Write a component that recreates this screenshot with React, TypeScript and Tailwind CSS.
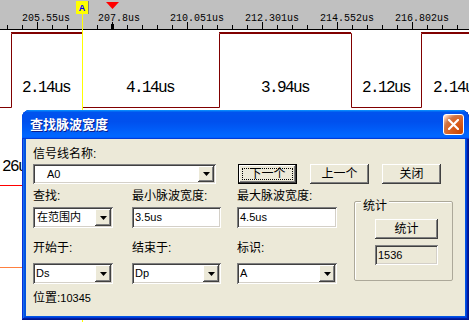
import React from 'react';

const ticks = Array.from({ length: 31 }, (_, i) => 7 + i * 15);

const rulerLabels = [
  { x: 22, text: '205.55us' },
  { x: 98, text: '207.8us' },
  { x: 170, text: '210.051us' },
  { x: 245, text: '212.301us' },
  { x: 320, text: '214.552us' },
  { x: 395, text: '216.802us' },
];

const pulseLabels = [
  { x: 46, text: '2.14us' },
  { x: 150, text: '4.14us' },
  { x: 285, text: '3.94us' },
  { x: 386, text: '2.12us' },
  { x: 457, text: '2.14us' },
];

const cjk = "font-['Liberation_Sans','Noto_Sans_CJK_SC',sans-serif]";

const sunken =
  'bg-white shadow-[inset_1px_1px_#808080,inset_-1px_-1px_#ffffff,inset_2px_2px_#404040,inset_-2px_-2px_#d4d0c8]';
const raised =
  'bg-[#ece9d8] shadow-[inset_-1px_-1px_#404040,inset_1px_1px_#ffffff,inset_-2px_-2px_#808080,inset_2px_2px_#ece9d8]';

function Waveform() {
  return (
    <svg width={469} height={322} className="block">
      {/* ruler */}
      <rect x={0} y={0} width={469} height={29} fill="#c0c0c0" />
      <line x1={0} y1={29.5} x2={469} y2={29.5} stroke="#000" />
      {ticks.map((x) => {
        const tall = (x - 37) % 75 === 0;
        return (
          <line key={x} x1={x + 0.5} y1={tall ? 22 : 25} x2={x + 0.5} y2={29} stroke="#000" />
        );
      })}
      <rect x={111} y={24} width={3} height={5} fill="#000" />
      {rulerLabels.map((l) => (
        <text
          key={l.text}
          x={l.x}
          y={21}
          fontFamily="Liberation Mono, monospace"
          fontSize={10}
          fill="#000"
        >
          {l.text}
        </text>
      ))}
      {/* marker A */}
      <rect x={76} y={1} width={12} height={13} fill="#ffff00" />
      <line x1={88.5} y1={1} x2={88.5} y2={14} stroke="#808080" />
      <text
        x={82}
        y={11}
        textAnchor="middle"
        fontFamily="Liberation Sans, sans-serif"
        fontWeight="bold"
        fontSize={9}
        fill="#0000ff"
      >
        A
      </text>
      <polygon points="106,2 119,2 112.5,9" fill="#ff0000" />

      {/* pulses */}
      <path
        d="M0 107.5 H11.5 V33.5 H82.5 V107.5 H219.5 V33.5 H351.5 V107.5 H421.5 V33.5 H469"
        fill="none"
        stroke="#800000"
      />
      <line x1={11} y1={32.5} x2={82} y2={32.5} stroke="#800000" />
      <line x1={219} y1={32.5} x2={351} y2={32.5} stroke="#800000" />
      <line x1={421} y1={32.5} x2={469} y2={32.5} stroke="#800000" />
      {pulseLabels.map((l) => (
        <text
          key={l.x}
          x={l.x}
          y={92}
          textAnchor="middle"
          fontFamily="Liberation Mono, monospace"
          fontSize={16}
          letterSpacing={-1.6}
          fill="#000"
        >
          {l.text}
        </text>
      ))}

      {/* second signal, mostly hidden */}
      <text x={2} y={171} fontFamily="Liberation Mono, monospace" fontSize={16} letterSpacing={-1.6} fill="#000">
        26us
      </text>
      <line x1={0} y1={185.5} x2={22} y2={185.5} stroke="#ff0000" />
      <line x1={0} y1={267.5} x2={22} y2={267.5} stroke="#ff8040" />

      <line x1={82.5} y1={14} x2={82.5} y2={322} stroke="#ffff00" />
    </svg>
  );
}

function Combo({ value, className, textPad = 'pl-[3px]' }: { value: string; className: string; textPad?: string }) {
  return (
    <div className={`relative flex items-center ${sunken} ${className}`}>
      <span className={`text-[11px] text-black ${cjk} ${textPad}`}>{value}</span>
      <div
        className={`absolute right-[2px] top-[2px] bottom-[2px] w-[16px] flex items-center justify-center ${raised}`}
      >
        <svg width={7} height={4}>
          <polygon points="0,0 7,0 3.5,4" fill="#000" />
        </svg>
      </div>
    </div>
  );
}

function Field({ value, className }: { value: string; className: string }) {
  return (
    <div className={`flex items-center pl-[3px] ${sunken} ${className}`}>
      <span className="text-[11px] text-black font-['Liberation_Sans',sans-serif]">{value}</span>
    </div>
  );
}

function Button({ label, primary }: { label: string; primary?: boolean }) {
  if (primary) {
    return (
      <div className="w-[59px] h-[20px] border border-black">
        <div className={`w-full h-full flex items-center justify-center ${raised} p-[3px]`}>
          <div className="w-full h-full border border-dotted border-black flex items-center justify-center">
            <span className={`text-[12px] leading-[12px] ${cjk}`}>{label}</span>
          </div>
        </div>
      </div>
    );
  }
  return (
    <div className={`w-[59px] h-[20px] flex items-center justify-center ${raised}`}>
      <span className={`text-[12px] leading-[12px] ${cjk}`}>{label}</span>
    </div>
  );
}

function Label({ children }: { children: React.ReactNode }) {
  return <div className={`h-[14px] text-[12px] leading-[14px] text-black whitespace-nowrap ${cjk}`}>{children}</div>;
}

function Dialog() {
  return (
    <div className="absolute left-[22px] top-[110px] w-[447px] h-[210px] flex flex-col rounded-t-[8px] bg-[#0054e3] shadow-[inset_-1px_-1px_#00138c,inset_1px_1px_#0831d9,inset_-2px_-2px_#001ea0,inset_2px_2px_#166aee,inset_-3px_-3px_#003bda,inset_3px_3px_#0855dd]">
      <div className="h-[29px] flex items-center justify-between pl-[8px] pr-[5px] rounded-t-[8px] bg-[linear-gradient(#0997ff_0%,#0053ee_8%,#0050ee_40%,#0066ff_88%,#0066ff_93%,#005bff_95%,#003dd7_96%,#003dd7_100%)]">
        <span className={`text-[13px] font-bold text-white [text-shadow:1px_1px_0_#0a1f8f] ${cjk}`}>查找脉波宽度</span>
        <div className="w-[21px] h-[21px] rounded-[3px] border border-white flex items-center justify-center bg-[radial-gradient(circle_at_90%_90%,#cc4600_0%,#dc6527_55%,#cd7546_70%,#ffccb2_90%,#ffffff_100%)] bg-[#e0542c]">
          <svg width={11} height={11}>
            <path d="M1 1 L10 10 M10 1 L1 10" stroke="#fff" strokeWidth={2.2} strokeLinecap="square" />
          </svg>
        </div>
      </div>
      <div className="mx-[4px] mb-[4px] flex-1 bg-[#ece9d8] pl-[7px] pt-[8px]">
        <Label>信号线名称:</Label>
        <div className="mt-[3px] flex items-center">
          <Combo value="A0" className="w-[183px] h-[20px]" textPad="pl-[14px]" />
          <div className="ml-[22px] flex gap-[13px]">
            <Button label="下一个" primary />
            <Button label="上一个" />
            <Button label="关闭" />
          </div>
        </div>
        <div className="mt-[5px] flex">
          <div className="grid grid-cols-[99px_105px_100px]">
            <Label>查找:</Label>
            <Label>最小脉波宽度:</Label>
            <Label>最大脉波宽度:</Label>
            <Combo value="在范围内" className="mt-[4px] w-[80px] h-[21px]" textPad="pl-[4px]" />
            <Field value="3.5us" className="mt-[4px] w-[89px] h-[21px]" />
            <Field value="4.5us" className="mt-[4px] w-[100px] h-[21px]" />
            <div className="mt-[13px]">
              <Label>开始于:</Label>
            </div>
            <div className="mt-[13px]">
              <Label>结束于:</Label>
            </div>
            <div className="mt-[13px]">
              <Label>标识:</Label>
            </div>
            <Combo value="Ds" className="mt-[8px] w-[80px] h-[21px]" />
            <Combo value="Dp" className="mt-[8px] w-[89px] h-[21px]" />
            <Combo value="A" className="mt-[8px] w-[100px] h-[21px]" />
          </div>
          <div className="relative ml-[17px] mt-[12px] w-[99px] h-[80px] border border-[#aca899] rounded-[2px] shadow-[inset_1px_1px_#ffffff]">
            <div className={`absolute left-[6px] -top-[3px] px-[2px] bg-[#ece9d8] text-[12px] leading-[14px] ${cjk}`}>统计</div>
            <div className="ml-[20px] mt-[17px]">
              <div className={`w-[63px] h-[20px] flex items-center justify-center ${raised}`}>
                <span className={`text-[12px] leading-[12px] ${cjk}`}>统计</span>
              </div>
              <div className="mt-[6px] w-[63px] h-[20px] flex items-center pl-[3px] bg-[#ece9d8] shadow-[inset_1px_1px_#808080,inset_-1px_-1px_#ffffff,inset_2px_2px_#404040,inset_-2px_-2px_#d4d0c8]">
                <span className="text-[11px] font-['Liberation_Sans',sans-serif]">1536</span>
              </div>
            </div>
          </div>
        </div>
        <div className="mt-[7px]">
          <Label>
            位置:<span className="text-[11px]">10345</span>
          </Label>
        </div>
      </div>
    </div>
  );
}

export default function App() {
  return (
    <div className="relative w-[469px] h-[322px] overflow-hidden bg-white">
      <Waveform />
      <Dialog />
    </div>
  );
}
